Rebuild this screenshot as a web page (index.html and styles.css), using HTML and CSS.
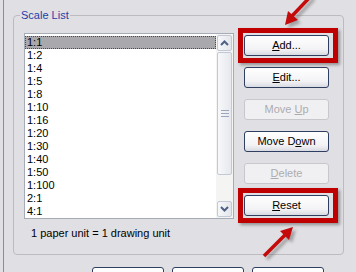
FILE: index.html
```html
<!DOCTYPE html>
<html>
<head>
<meta charset="utf-8">
<link rel="stylesheet" href="styles.css">
</head>
<body>
<div class="pane">
  <div class="group">
    <span class="legend">Scale List</span>
    <div class="row">
      <div class="list">
        <div class="items">
          <div class="item sel"><span>1:1</span></div>
          <div class="item"><span>1:2</span></div>
          <div class="item"><span>1:4</span></div>
          <div class="item"><span>1:5</span></div>
          <div class="item"><span>1:8</span></div>
          <div class="item"><span>1:10</span></div>
          <div class="item"><span>1:16</span></div>
          <div class="item"><span>1:20</span></div>
          <div class="item"><span>1:30</span></div>
          <div class="item"><span>1:40</span></div>
          <div class="item"><span>1:50</span></div>
          <div class="item"><span>1:100</span></div>
          <div class="item"><span>2:1</span></div>
          <div class="item"><span>4:1</span></div>
        </div>
        <div class="sbar">
          <div class="sbtn">
            <svg width="9" height="6" viewBox="0 0 9 6"><path d="M1 5 L4.5 1.5 L8 5" fill="none" stroke="#4d6185" stroke-width="2"/></svg>
          </div>
          <div class="thumb">
            <svg width="8" height="7" viewBox="0 0 8 7"><path d="M0 0.5H8M0 3.5H8M0 6.5H8" stroke="#9aa6bb" stroke-width="1"/></svg>
          </div>
          <div class="track"></div>
          <div class="sbtn">
            <svg width="9" height="6" viewBox="0 0 9 6"><path d="M1 1 L4.5 4.5 L8 1" fill="none" stroke="#4d6185" stroke-width="2"/></svg>
          </div>
        </div>
      </div>
      <div class="btns">
        <button class="btn"><u>A</u>dd...</button>
        <button class="btn"><u>E</u>dit...</button>
        <button class="btn dis">Move <u>U</u>p</button>
        <button class="btn">Move D<u>o</u>wn</button>
        <button class="btn dis"><u>D</u>elete</button>
        <button class="btn"><u>R</u>eset</button>
      </div>
    </div>
    <div class="note">1 paper unit = 1 drawing unit</div>
  </div>
  <div class="bottom">
    <button class="btn wide"></button>
    <button class="btn wide"></button>
    <button class="btn wide"></button>
  </div>
</div>
<div class="mark mark-add"></div>
<div class="mark mark-reset"></div>
<svg class="arrows" width="356" height="272" viewBox="0 0 356 272">
  <defs>
    <filter id="sh" x="-50%" y="-50%" width="200%" height="200%">
      <feGaussianBlur stdDeviation="1.5"/>
    </filter>
  </defs>
  <g transform="translate(3,3)" opacity="0.45" filter="url(#sh)">
    <path d="M311 -4 L292 16" stroke="#555" stroke-width="3.5"/>
    <path d="M285 25 L288 11 L298 20 Z" fill="#555"/>
    <path d="M264 256 L286 234" stroke="#555" stroke-width="3.5"/>
    <path d="M293 227 L280 231 L289 240 Z" fill="#555"/>
  </g>
  <path d="M311 -4 L292 16" stroke="#c40a0a" stroke-width="3.5"/>
  <path d="M285 25 L288 11 L298 20 Z" fill="#c40a0a"/>
  <path d="M264 256 L286 234" stroke="#c40a0a" stroke-width="3.5"/>
  <path d="M293 227 L280 231 L289 240 Z" fill="#c40a0a"/>
</svg>
</body>
</html>
```
FILE: styles.css
```css
html, body {
  margin: 0;
  padding: 0;
}
body {
  width: 356px;
  height: 272px;
  overflow: hidden;
  background: #e0dfe3;
  font-family: "Liberation Sans", Arial, sans-serif;
  font-size: 11px;
  color: #000;
  position: relative;
}
.pane {
  margin-left: 3px;
  border-left: 1px solid #8d8d92;
  height: 272px;
  box-sizing: border-box;
  padding-top: 15px;
  overflow: hidden;
}
.group {
  position: relative;
  margin-left: 9px;
  width: 331px;
  height: 240px;
  box-sizing: border-box;
  border: 1px solid #bcbcc0;
  border-radius: 4px;
  padding: 17px 0 0 10px;
}
.legend {
  position: absolute;
  top: -8px;
  left: 6px;
  padding: 0 1px;
  line-height: 14px;
  background: #e0dfe3;
  color: #1c3fa8;
}
.row {
  display: flex;
  gap: 10px;
}
.list {
  display: flex;
  width: 210px;
  height: 186px;
  box-sizing: border-box;
  border: 1px solid #a5acb5;
  background: #fff;
}
.items {
  width: 191px;
  padding-top: 2px;
}
.item {
  height: 13px;
  line-height: 13px;
  padding-left: 2px;
}
.item.sel {
  background: #a9a9ad;
  outline: 1px dotted #4a4a4a;
  outline-offset: -1px;
}
.sbar {
  width: 17px;
  display: flex;
  flex-direction: column;
  background: #f4f4f2;
  padding: 1px 0;
  box-sizing: border-box;
}
.sbtn {
  height: 16px;
  margin: 0 1px;
  box-sizing: border-box;
  border: 1px solid #c3c8d6;
  border-radius: 2px;
  background: linear-gradient(90deg, #f6f7f9, #e4e6ec);
  display: flex;
  align-items: center;
  justify-content: center;
}
.thumb {
  height: 123px;
  margin: 1px 1px 0;
  box-sizing: border-box;
  border: 1px solid #c3c8d6;
  border-radius: 2px;
  background: linear-gradient(90deg, #f8f8fa, #e6e8ee);
  display: flex;
  align-items: center;
  justify-content: center;
}
.track {
  flex: 1;
}
.btns {
  display: flex;
  flex-direction: column;
  gap: 11px;
  padding-top: 2px;
}
.btn {
  width: 85px;
  height: 21px;
  padding: 0;
  margin: 0;
  box-sizing: border-box;
  border: 1px solid #2f3f62;
  border-radius: 3px;
  background: linear-gradient(#ffffff, #f3f3f6 70%, #d9dae2);
  font-family: "Liberation Sans", Arial, sans-serif;
  font-size: 11px;
  color: #000;
  line-height: 19px;
  text-align: center;
}
.btn.dis {
  border-color: #c8c8cc;
  background: #f0f0f2;
  color: #acacb0;
}
.note {
  margin: 8px 0 0 7px;
  line-height: 13px;
}
.bottom {
  display: flex;
  gap: 8px;
  height: 5px;
  overflow: hidden;
  margin: 12px 0 0 88px;
}
.btn.wide {
  width: 72px;
  height: 23px;
  flex: none;
}
.mark {
  position: absolute;
  left: 238px;
  width: 100px;
  height: 35px;
  box-sizing: border-box;
  border: 5px solid #c00000;
  box-shadow: 2px 2px 3px rgba(0,0,0,0.35);
}
.mark-add {
  top: 28px;
}
.mark-reset {
  top: 188px;
}
.arrows {
  position: absolute;
  left: 0;
  top: 0;
}
```
